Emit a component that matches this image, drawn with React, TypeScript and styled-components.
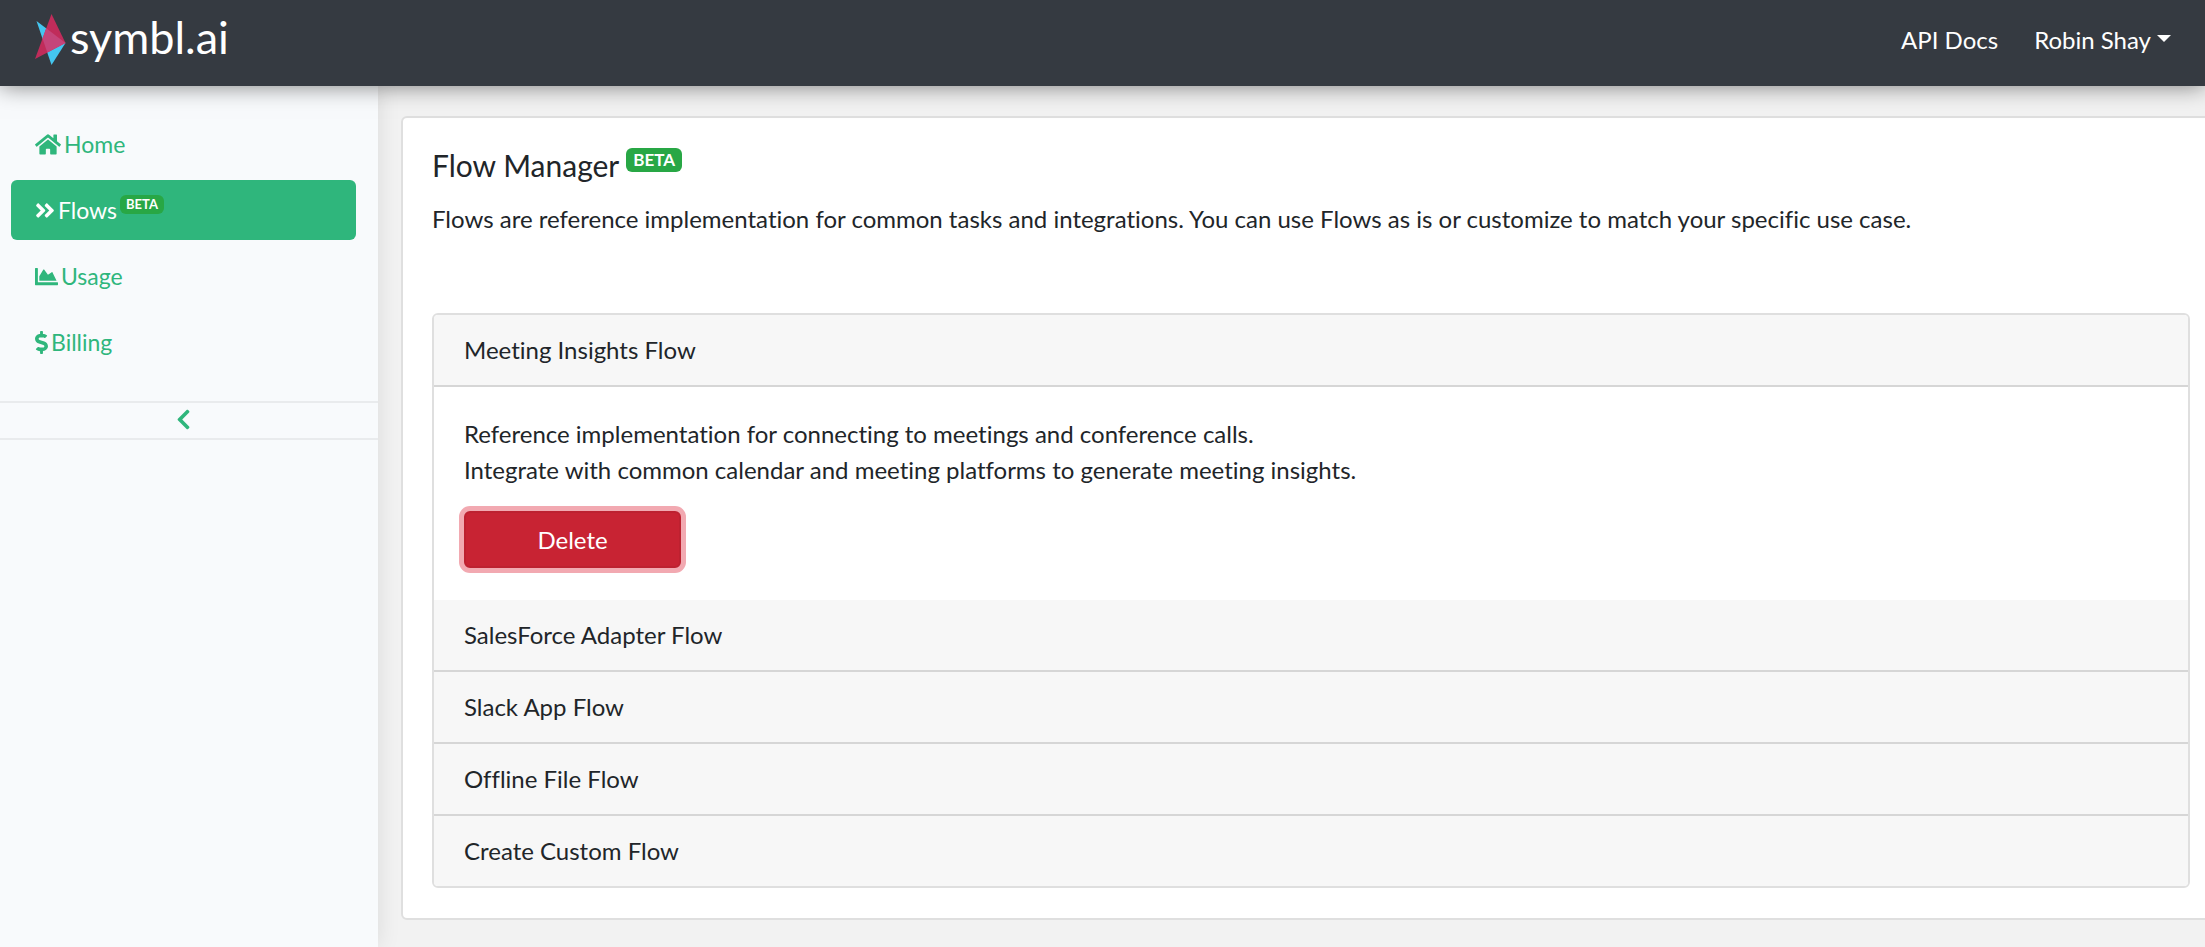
import React, { useState } from "react";
import styled, { createGlobalStyle, css } from "styled-components";
import {
  FaAngleDoubleRight,
  FaChartArea,
  FaChevronLeft,
  FaDollarSign,
  FaHome,
} from "react-icons/fa";

const GlobalStyle = createGlobalStyle`
  *, *::before, *::after { box-sizing: border-box; }
  body {
    margin: 0;
    background: #f2f2f2;
    color: #212529;
    font-family: Lato, "Liberation Sans", sans-serif;
    font-size: 24px;
    line-height: 36px;
    font-variant-ligatures: none;
  }
  h1, h2, p { margin: 0; font-weight: 400; }
  button { font: inherit; color: inherit; font-variant-ligatures: inherit; }
`;

const Page = styled.div`
  display: flex;
  flex-direction: column;
  min-height: 100vh;
  overflow: hidden;
`;

const Header = styled.header`
  position: relative;
  z-index: 2;
  display: flex;
  align-items: center;
  justify-content: space-between;
  height: 86px;
  padding: 0 34px 6px 35px;
  background: #353a41;
  color: #fff;
  box-shadow: 0 0 22px rgba(0, 0, 0, 0.5);
`;

const Brand = styled.a`
  display: flex;
  align-items: center;
  gap: 4px;
  color: #fff;
  font-size: 45px;
  line-height: 52px;
  text-decoration: none;

  span { padding-bottom: 6px; }
`;

const TopNav = styled.nav`
  display: flex;
  align-items: center;
  gap: 36px;
`;

const topItem = css`
  color: #fff;
  text-decoration: none;
`;

const TopLink = styled.a`
  ${topItem}
`;

const UserMenu = styled.button`
  ${topItem}
  display: flex;
  gap: 6px;
  padding: 0;
  border: 0;
  background: none;
  cursor: pointer;

  &::after {
    content: "";
    margin-top: 13px;
    border: 7px solid transparent;
    border-top-color: #fff;
    border-bottom: 0;
    height: 0;
  }
`;

const Columns = styled.div`
  display: flex;
  flex: 1;
`;

const Sidebar = styled.aside`
  flex: 0 0 378px;
  background: #f8fafc;
  box-shadow: 0 0 22px rgba(0, 0, 0, 0.1);
`;

const SideNav = styled.nav`
  display: flex;
  flex-direction: column;
  gap: 6px;
  padding: 28px 22px 29px 11px;
  font-size: 23px;
`;

const SideLink = styled.a<{ $active?: boolean; $icon: number }>`
  display: flex;
  align-items: center;
  gap: 3px;
  height: 60px;
  padding: 0 24px;
  border-radius: 6px;
  background: ${(p) => (p.$active ? "#2fb67c" : "transparent")};
  color: ${(p) => (p.$active ? "#fff" : "#2fb67c")};
  text-decoration: none;

  svg {
    flex: none;
    width: ${(p) => p.$icon}px;
    height: 23px;
  }
`;

const Collapse = styled.button`
  display: flex;
  align-items: center;
  justify-content: center;
  width: 100%;
  height: 39px;
  padding: 0 12px 2px 0;
  border: solid #e9ebed;
  border-width: 2px 0;
  background: none;
  color: #2fb67c;
  cursor: pointer;
`;

const Badge = styled.span<{ $small?: boolean }>`
  align-self: flex-start;
  margin-top: ${(p) => (p.$small ? "15px" : "0")};
  padding: ${(p) => (p.$small ? "0 6px" : "0 7px")};
  border-radius: 6px;
  background: #28a745;
  color: #fff;
  font-size: ${(p) => (p.$small ? "13px" : "17px")};
  line-height: ${(p) => (p.$small ? "19px" : "24px")};
  font-weight: 700;
`;

const Main = styled.main`
  flex: 1;
  min-width: 0;
  margin-right: -16px;
  padding: 30px 0 27px 23px;
`;

const Card = styled.section`
  padding: 30px 29px;
  border: 2px solid #dfdfdf;
  border-radius: 6px;
  background: #fff;
`;

const Title = styled.h1`
  display: flex;
  gap: 7px;
  font-size: 30px;
  line-height: 34px;
`;

const Intro = styled.p`
  padding: 19px 0 76px;
`;

const Accordion = styled.div`
  border: 2px solid #dfdfdf;
  border-radius: 6px;
  overflow: hidden;
`;

const FlowHeading = styled.h2`
  font-size: 24px;
  line-height: 36px;

  &:not(:last-child) { border-bottom: 2px solid #d6d6d6; }
`;

const FlowToggle = styled.button`
  display: block;
  width: 100%;
  padding: 17px 30px;
  border: 0;
  background: #f7f7f7;
  text-align: left;
  cursor: pointer;
`;

const FlowBody = styled.div`
  padding: 29px 30px 32px;
`;

const DeleteButton = styled.button`
  display: block;
  width: 217px;
  height: 57px;
  margin-top: 23px;
  border: 2px solid #bd2130;
  border-radius: 6px;
  background: #c82333;
  color: #fff;
  box-shadow: 0 0 0 5px #f2a9b1;
  cursor: pointer;
`;

const FLOWS = [
  "Meeting Insights Flow",
  "SalesForce Adapter Flow",
  "Slack App Flow",
  "Offline File Flow",
  "Create Custom Flow",
];

function LogoMark() {
  return (
    <svg width="31" height="52" viewBox="0 0 31 52" aria-hidden="true">
      <path d="M1.500 7 30.500 29 16.500 51Z" fill="#44c6f0" />
      <path d="M16.500 0 30.500 29 0 45Z" fill="#c02c5a" />
      <path d="M11.200 14.300 30.500 29 12.300 38.600 7.500 24.600Z" fill="#c5457a" />
    </svg>
  );
}

export default function App() {
  const [open, setOpen] = useState(0);
  return (
    <Page>
      <GlobalStyle />
      <Header>
        <Brand href="#home">
          <LogoMark />
          <span>symbl.ai</span>
        </Brand>
        <TopNav>
          <TopLink href="#docs">API Docs</TopLink>
          <UserMenu type="button">Robin Shay</UserMenu>
        </TopNav>
      </Header>
      <Columns>
        <Sidebar>
          <SideNav>
            <SideLink href="#home" $icon={26}><FaHome />Home</SideLink>
            <SideLink href="#flows" $icon={20} $active>
              <FaAngleDoubleRight />Flows<Badge $small>BETA</Badge>
            </SideLink>
            <SideLink href="#usage" $icon={23}><FaChartArea />Usage</SideLink>
            <SideLink href="#billing" $icon={13}><FaDollarSign />Billing</SideLink>
          </SideNav>
          <Collapse type="button" aria-label="Collapse sidebar">
            <FaChevronLeft size={23} />
          </Collapse>
        </Sidebar>
        <Main>
          <Card>
            <Title>Flow Manager<Badge>BETA</Badge></Title>
            <Intro>
              Flows are reference implementation for common tasks and integrations. You can use
              Flows as is or customize to match your specific use case.
            </Intro>
            <Accordion>
              {FLOWS.map((name, i) => (
                <React.Fragment key={name}>
                  <FlowHeading>
                    <FlowToggle
                      type="button"
                      aria-expanded={open === i}
                      onClick={() => setOpen(i)}
                    >
                      {name}
                    </FlowToggle>
                  </FlowHeading>
                  {i === 0 && open === 0 && (
                    <FlowBody>
                      <p>Reference implementation for connecting to meetings and conference calls.</p>
                      <p>
                        Integrate with common calendar and meeting platforms to generate meeting
                        insights.
                      </p>
                      <DeleteButton type="button">Delete</DeleteButton>
                    </FlowBody>
                  )}
                </React.Fragment>
              ))}
            </Accordion>
          </Card>
        </Main>
      </Columns>
    </Page>
  );
}
